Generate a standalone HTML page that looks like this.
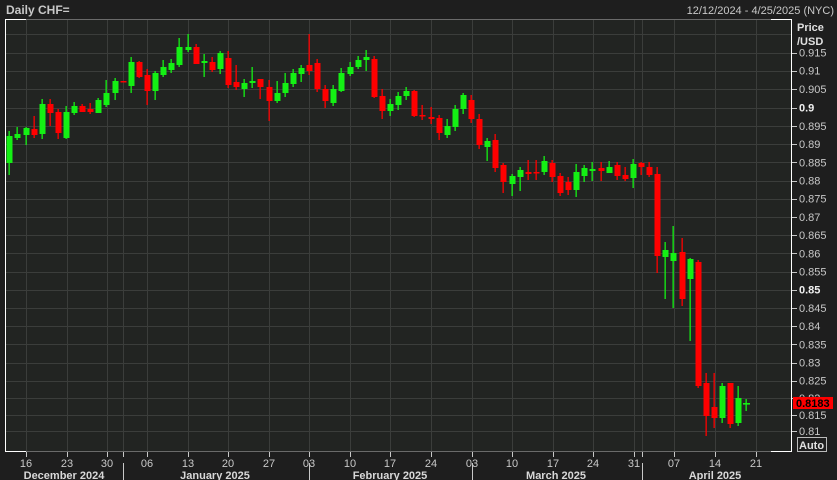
<!DOCTYPE html>
<html><head><meta charset="utf-8"><style>
html,body{margin:0;padding:0;background:#1e1e1e;width:837px;height:480px;overflow:hidden;font-family:"Liberation Sans",sans-serif}
</style></head><body>
<svg id="s" width="837" height="480" xmlns="http://www.w3.org/2000/svg" style="position:absolute;left:0;top:0">
<rect x="0" y="0" width="837" height="480" fill="#1e1e1e"/>
<rect x="5" y="19" width="786" height="432" fill="#222422"/>
<g id="grid" stroke="#3b3d3b" stroke-width="1"></g>
<g id="candles"></g>
<g id="frame">
<line x1="5" y1="19.5" x2="791" y2="19.5" stroke="#6a6a6a"/>
<line x1="5" y1="451.5" x2="791" y2="451.5" stroke="#6a6a6a"/>
<line x1="5.5" y1="19" x2="5.5" y2="452" stroke="#ffffff"/>
<line x1="5" y1="19.5" x2="26" y2="19.5" stroke="#ffffff"/>
<line x1="5" y1="451.5" x2="26" y2="451.5" stroke="#ffffff"/>
<line x1="771" y1="19.5" x2="792" y2="19.5" stroke="#ffffff"/>
<line x1="771" y1="451.5" x2="792" y2="451.5" stroke="#ffffff"/>
<line x1="791.5" y1="19" x2="791.5" y2="452" stroke="#ffffff"/>
</g>
<g id="axis" font-size="11" fill="#c8c8c8"></g>
<text x="6" y="14" font-size="12" font-weight="bold" fill="#c8c8c8">Daily CHF=</text>
<text x="834" y="14" font-size="11" fill="#c8c8c8" text-anchor="end">12/12/2024 - 4/25/2025 (NYC)</text>
<text x="797" y="31" font-size="11" font-weight="bold" fill="#e0e0e0">Price</text>
<text x="797" y="45" font-size="11" font-weight="bold" fill="#e0e0e0">/USD</text>
<rect x="793" y="397" width="40" height="12" fill="#ff0000"/>
<text x="796" y="407" font-size="11" font-weight="bold" fill="#000">0.8183</text>
<rect x="797.5" y="437.5" width="29" height="14" fill="none" stroke="#bbbbbb"/>
<text x="799" y="449" font-size="11" font-weight="bold" fill="#e0e0e0">Auto</text>
</svg>
<script>
var NS="http://www.w3.org/2000/svg";
function el(p,t,a,txt){var e=document.createElementNS(NS,t);for(var k in a)e.setAttribute(k,a[k]);if(txt)e.textContent=txt;document.getElementById(p).appendChild(e);return e;}
// horizontal grid + price labels
var lv=[["0.915",52.5],["0.91",70.7],["0.905",88.9],["0.9",107.7,1],["0.895",126],["0.89",144],["0.885",162.3],["0.88",180.5],["0.875",198.7],["0.87",216.9],["0.865",235.1],["0.86",253.3],["0.855",271.5],["0.85",289.7,1],["0.845",307.9],["0.84",326.1],["0.835",344.3],["0.83",362.5],["0.825",380.7],["0.82",398],["0.815",415],["0.81",431]];
el("grid","line",{x1:5,y1:34.5,x2:791,y2:34.5});
lv.forEach(function(l){var y=Math.round(l[1])+0.5;el("grid","line",{x1:5,y1:y,x2:791,y2:y});
el("axis","line",{x1:792,y1:y,x2:797,y2:y,stroke:"#c8c8c8"});
var t=el("axis","text",{x:799,y:l[1]+4},l[0]);if(l[2]){t.setAttribute("font-weight","bold");t.setAttribute("fill","#f0f0f0");}});
// vertical grid + date labels
var ds=[["16",26],["23",67],["30",107],["06",147],["13",188],["20",228],["27",269],["03",309],["10",350],["17",390],["24",431],["03",472],["10",512],["17",553],["24",593],["31",634],["07",674],["14",715],["21",756]];
ds.forEach(function(d){var x=d[1]+0.5;el("grid","line",{x1:x,y1:20,x2:x,y2:451});
el("axis","line",{x1:x,y1:452,x2:x,y2:457,stroke:"#c8c8c8"});
el("axis","text",{x:d[1],y:467,"text-anchor":"middle"},d[0]);});
[123,642].forEach(function(x){el("grid","line",{x1:x+0.5,y1:20,x2:x+0.5,y2:451});el("axis","line",{x1:x+0.5,y1:452,x2:x+0.5,y2:457,stroke:"#c8c8c8"});});
[123,309,472,642].forEach(function(x){el("axis","line",{x1:x+0.5,y1:463,x2:x+0.5,y2:480,stroke:"#c8c8c8"});});
[["December 2024",64],["January 2025",215],["February 2025",390],["March 2025",556],["April 2025",715]].forEach(function(m){
el("axis","text",{x:m[1],y:479,"text-anchor":"middle","font-weight":"bold",fill:"#d8d8d8"},m[0]);});
// candles: [bodyTop, bodyBottom, wickTop, wickBottom, g/r]
var C=[
[136,163,131,175,"g"],[134,138,127,140,"g"],[128,135,127,145,"g"],[129,135,116,138,"r"],[104,134,99,139,"g"],
[104,113,99,126,"r"],[112,133,109,139,"r"],[112,138,106,139,"g"],[106,113,102,115,"g"],[106,112,104,112,"r"],
[109,112,103,114,"r"],[100,113,98,113,"g"],[93,105,80,107,"g"],[81,93,78,100,"g"],[81,82,81,82,"r"],
[62,86,57,93,"g"],[62,77,61,78,"r"],[75,91,69,105,"r"],[73,91,71,100,"g"],[67,75,60,77,"g"],
[63,70,59,73,"g"],[47,65,38,67,"g"],[47,50,34,52,"g"],[47,64,44,64,"r"],[61,63,54,77,"g"],
[62,70,57,72,"r"],[53,69,51,74,"g"],[58,85,51,88,"r"],[82,87,65,90,"r"],[83,89,79,97,"g"],
[81,83,67,88,"g"],[79,87,79,99,"r"],[87,101,80,121,"r"],[93,101,81,103,"g"],[83,93,73,97,"g"],
[73,84,69,87,"g"],[68,74,65,82,"g"],[65,71,34,75,"r"],[63,89,59,92,"r"],[89,101,85,108,"r"],
[89,103,85,106,"g"],[73,91,68,92,"g"],[67,74,62,76,"g"],[60,67,56,69,"g"],[57,60,50,71,"g"],
[59,97,56,98,"r"],[96,111,89,119,"r"],[104,111,99,116,"g"],[96,105,92,110,"g"],[91,96,87,100,"g"],
[91,116,90,117,"r"],[115,116,105,120,"r"],[117,119,107,124,"r"],[118,133,115,140,"r"],[126,135,119,138,"g"],
[109,127,105,131,"g"],[95,109,93,114,"g"],[100,119,95,123,"r"],[119,145,114,149,"r"],[141,147,138,161,"g"],
[140,168,134,172,"r"],[165,182,163,193,"r"],[176,184,174,196,"g"],[170,177,167,191,"g"],[172,174,160,180,"r"],
[172,173,160,180,"r"],[161,172,156,175,"g"],[163,177,160,182,"r"],[176,193,173,196,"r"],[182,190,177,195,"r"],
[172,190,164,197,"g"],[168,176,165,182,"g"],[169,171,162,181,"g"],[168,171,162,181,"r"],[167,173,161,173,"g"],
[165,176,162,180,"r"],[175,179,167,181,"r"],[164,178,159,188,"g"],[163,167,162,175,"r"],[167,175,162,177,"r"],
[174,256,167,273,"r"],[250,257,242,299,"g"],[253,261,226,308,"g"],[252,299,238,306,"r"],[259,279,258,341,"g"],
[262,386,260,388,"r"],[383,416,373,436,"r"],[407,418,373,428,"r"],[386,418,383,423,"g"],[383,424,383,428,"r"],
[398,423,386,426,"g"],[403,405,399,411,"g"]];
C.forEach(function(c,i){var x=Math.round(9.3+i*8.1);var col=c[4]=="g"?"#14f014":"#ff0000";
el("candles","rect",{x:x-0.5,y:c[2],width:1.3,height:c[3]-c[2],fill:col});
var h=Math.max(c[1]-c[0],1.5);var w=(i==91)?5:5;
if(i==91){el("candles","rect",{x:x-3,y:c[0],width:7,height:1.6,fill:col});}
else el("candles","rect",{x:x-2.5,y:c[0],width:6,height:h,fill:col});});
</script>
</body></html>
